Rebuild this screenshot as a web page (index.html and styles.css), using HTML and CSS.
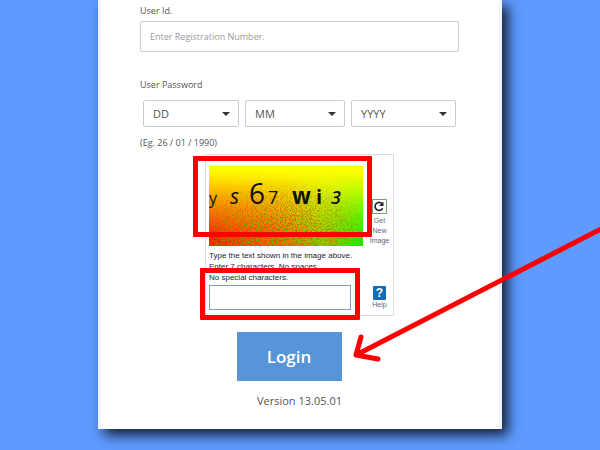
FILE: index.html
```
<!DOCTYPE html>
<html lang="en">
<head>
    <meta charset="UTF-8">
    <meta name="viewport" content="width=device-width, initial-scale=1.0">
    <title>Login</title>
    <link rel="stylesheet" href="styles.css">
</head>
<body>
    <main class="login-card">
        <form class="login-form">
            <div class="field">
                <label for="user-id">User Id.</label>
                <input class="text-input" type="text" id="user-id" placeholder="Enter Registration Number.">
            </div>

            <div class="field">
                <label for="day">User Password</label>
                <div class="date-row">
                    <div class="select-box day">
                        <select id="day" aria-label="Day"><option>DD</option></select>
                    </div>
                    <div class="select-box month">
                        <select id="month" aria-label="Month"><option>MM</option></select>
                    </div>
                    <div class="select-box year">
                        <select id="year" aria-label="Year"><option>YYYY</option></select>
                    </div>
                </div>
                <p class="example">(Eg. 26 / 01 / 1990)</p>
            </div>

            <section class="captcha">
                <div class="captcha-main">
                    <svg class="captcha-image" viewBox="0 0 154 79" preserveAspectRatio="none">
                        <defs>
                            <linearGradient id="across">
                                <stop offset="0" stop-color="#ff1800"/>
                                <stop offset="0.45" stop-color="#f06a00"/>
                                <stop offset="0.72" stop-color="#9cc800"/>
                                <stop offset="1" stop-color="#10f800"/>
                            </linearGradient>
                            <linearGradient id="down" x1="0" y1="0" x2="0" y2="1">
                                <stop offset="0.05" stop-color="#ffff00"/>
                                <stop offset="0.9" stop-color="#ffff00" stop-opacity="0"/>
                            </linearGradient>
                            <radialGradient id="spread" cx="0.45" cy="0.9" r="0.75">
                                <stop offset="0.2" stop-color="#fff"/>
                                <stop offset="1" stop-color="#fff" stop-opacity="0"/>
                            </radialGradient>
                            <mask id="fade"><rect width="154" height="79" fill="url(#spread)"/></mask>
                            <filter id="green-grain" x="0" y="0" width="1" height="1" color-interpolation-filters="sRGB">
                                <feTurbulence type="fractalNoise" baseFrequency="0.8" numOctaves="2" seed="4"/>
                                <feColorMatrix values="0 0 0 0 0.4  0 0 0 0 0.75  0 0 0 0 0  7 0 0 0 -3.6"/>
                            </filter>
                            <filter id="red-grain" x="0" y="0" width="1" height="1" color-interpolation-filters="sRGB">
                                <feTurbulence type="fractalNoise" baseFrequency="0.8" numOctaves="2" seed="9"/>
                                <feColorMatrix values="0 0 0 0 0.85  0 0 0 0 0.3  0 0 0 0 0  7 0 0 0 -3.7"/>
                            </filter>
                        </defs>
                        <rect width="154" height="79" fill="url(#across)"/>
                        <rect width="154" height="79" fill="url(#down)"/>
                        <g mask="url(#fade)">
                            <rect width="154" height="79" filter="url(#green-grain)"/>
                            <rect width="154" height="79" filter="url(#red-grain)"/>
                        </g>
                        <g class="captcha-glyphs">
                            <text x="0" y="38" font-size="16">y</text>
                            <text x="21" y="38" font-size="21" font-style="italic">s</text>
                            <text x="40" y="38" font-size="28">6</text>
                            <text x="59" y="38" font-size="18">7</text>
                            <text x="83" y="38" font-size="22" font-weight="700">w</text>
                            <text x="107" y="38" font-size="20" font-weight="700">i</text>
                            <text x="122" y="38" font-size="18" font-weight="600" font-style="italic">3</text>
                        </g>
                    </svg>
                    <label class="captcha-hint" for="captcha-text">Type the text shown in the image above.<br>Enter 7 characters. No spaces.<br>No special characters.</label>
                    <input class="captcha-input" type="text" id="captcha-text">
                </div>
                <div class="captcha-side">
                    <button type="button" class="side-button">
                        <svg class="refresh-icon" width="15" height="15" viewBox="0 0 15 15">
                            <rect x="0.5" y="0.5" width="14" height="14" fill="#fff" stroke="#6fa56f"/>
                            <path d="M10.6 9.3A4 4 0 1 1 10 4.6" fill="none" stroke="#223" stroke-width="1.7"/>
                            <path d="M11.5 2.5V7H7z" fill="#223"/>
                        </svg>
                        Get<br>New<br>Image
                    </button>
                    <button type="button" class="side-button">
                        <span class="help-icon">?</span>
                        Help
                    </button>
                </div>
                <div class="mark mark-image"></div>
                <div class="mark mark-input"></div>
            </section>

            <div class="submit-row">
                <button type="submit" class="login-button">Login</button>
                <svg class="arrow" width="252" height="138" viewBox="0 0 252 138">
                    <path d="M252 4L7 130M12 112L7 130L29 134" fill="none" stroke="#f00" stroke-width="5" stroke-linecap="round" stroke-linejoin="round"/>
                </svg>
            </div>
            <p class="version">Version 13.05.01</p>
        </form>
    </main>
</body>
</html>
```
FILE: styles.css
```
:root {
    --page-color: #5e9aff;
    --mark-color: #ff0000;
    --text-color: #555;
    --border-color: #ccc;
}

* {
    box-sizing: border-box;
}

body {
    margin: 0;
    background-color: var(--page-color);
    color: var(--text-color);
    font-family: "Open Sans", "Noto Sans", sans-serif;
    font-size: 9px;
    line-height: 16px;
    overflow-x: hidden;
}

p {
    margin: 0;
}

button,
input,
select {
    font-family: inherit;
    color: inherit;
}

.login-card {
    max-width: 404px;
    margin: 0 auto 21px;
    padding: 3px 40px 20px 39px;
    background-color: #fff;
    border: 3px solid #f0f4fa;
    border-top: none;
    border-bottom: none;
    box-shadow: 6px 6px 12px rgba(0, 0, 0, 0.8);
}

.login-form {
    display: flex;
    flex-direction: column;
}

.field {
    display: flex;
    flex-direction: column;
    margin-bottom: 25px;
}

.field + .field {
    margin-bottom: 3px;
}

.text-input {
    height: 31px;
    margin-top: 2px;
    padding: 0 9px;
    border: 1px solid var(--border-color);
    border-radius: 2px;
    font-size: 9px;
}

.text-input::placeholder {
    color: #999;
}

.date-row {
    display: flex;
    gap: 6px;
    margin: 7px 3px 8px;
}

.select-box {
    position: relative;
}

.select-box::after {
    content: "";
    position: absolute;
    top: 12px;
    right: 9px;
    border: 4px solid transparent;
    border-top-color: #333;
    border-bottom: none;
    pointer-events: none;
}

.day {
    flex: 96;
}

.month {
    flex: 100;
}

.year {
    flex: 105;
}

.select-box select {
    display: block;
    width: 100%;
    height: 27px;
    padding: 0 9px;
    appearance: none;
    background-color: #fff;
    border: 1px solid var(--border-color);
    border-radius: 2px;
    font-size: 11px;
}

.captcha {
    position: relative;
    align-self: center;
    display: flex;
    width: 189px;
    padding: 11px 3px 5px;
    border: 1px solid #ddd;
    font-family: "Liberation Sans", Arial, sans-serif;
    font-size: 8px;
    line-height: 11px;
}

.captcha-main {
    display: flex;
    flex-direction: column;
    width: 154px;
}

.captcha-image {
    display: block;
    width: 154px;
    height: 80px;
}

.captcha-glyphs {
    fill: #111;
    font-family: "Open Sans", sans-serif;
}

.captcha-hint {
    margin: 4px 0 2px;
    color: #223;
    white-space: nowrap;
}

.captcha-input {
    width: 142px;
    height: 25px;
    border: 1px solid #7f9db9;
    background-color: #fff;
}

.captcha-side {
    flex: 1;
    display: flex;
    flex-direction: column;
    justify-content: space-between;
    padding: 33px 0 0 6px;
}

.side-button {
    display: flex;
    flex-direction: column;
    align-items: center;
    padding: 0;
    border: none;
    background: none;
    color: #667;
    font-size: 7px;
    line-height: 10px;
    text-align: center;
    cursor: pointer;
}

.refresh-icon {
    margin-bottom: 2px;
}

.help-icon {
    width: 13px;
    height: 14px;
    border-radius: 1px;
    background-color: #0f6cb6;
    color: #fff;
    font-size: 12px;
    font-weight: 700;
    line-height: 14px;
}

/* Red highlight frames */
.mark {
    position: absolute;
    border: 5px solid var(--mark-color);
    border-radius: 1px;
    pointer-events: none;
}

.mark-image {
    top: 1px;
    left: -13px;
    width: 179px;
    height: 81px;
}

.mark-input {
    top: 113px;
    left: -6px;
    width: 160px;
    height: 52px;
}

.submit-row {
    position: relative;
    align-self: center;
    margin: 16px 21px 12px 0;
}

.login-button {
    display: block;
    width: 105px;
    height: 49px;
    border: none;
    background-color: #5794d8;
    color: #fff;
    font-size: 17px;
    font-weight: 600;
    cursor: pointer;
}

.arrow {
    position: absolute;
    top: -107px;
    left: 112px;
    pointer-events: none;
}

.version {
    font-size: 11px;
    text-align: center;
}
```
